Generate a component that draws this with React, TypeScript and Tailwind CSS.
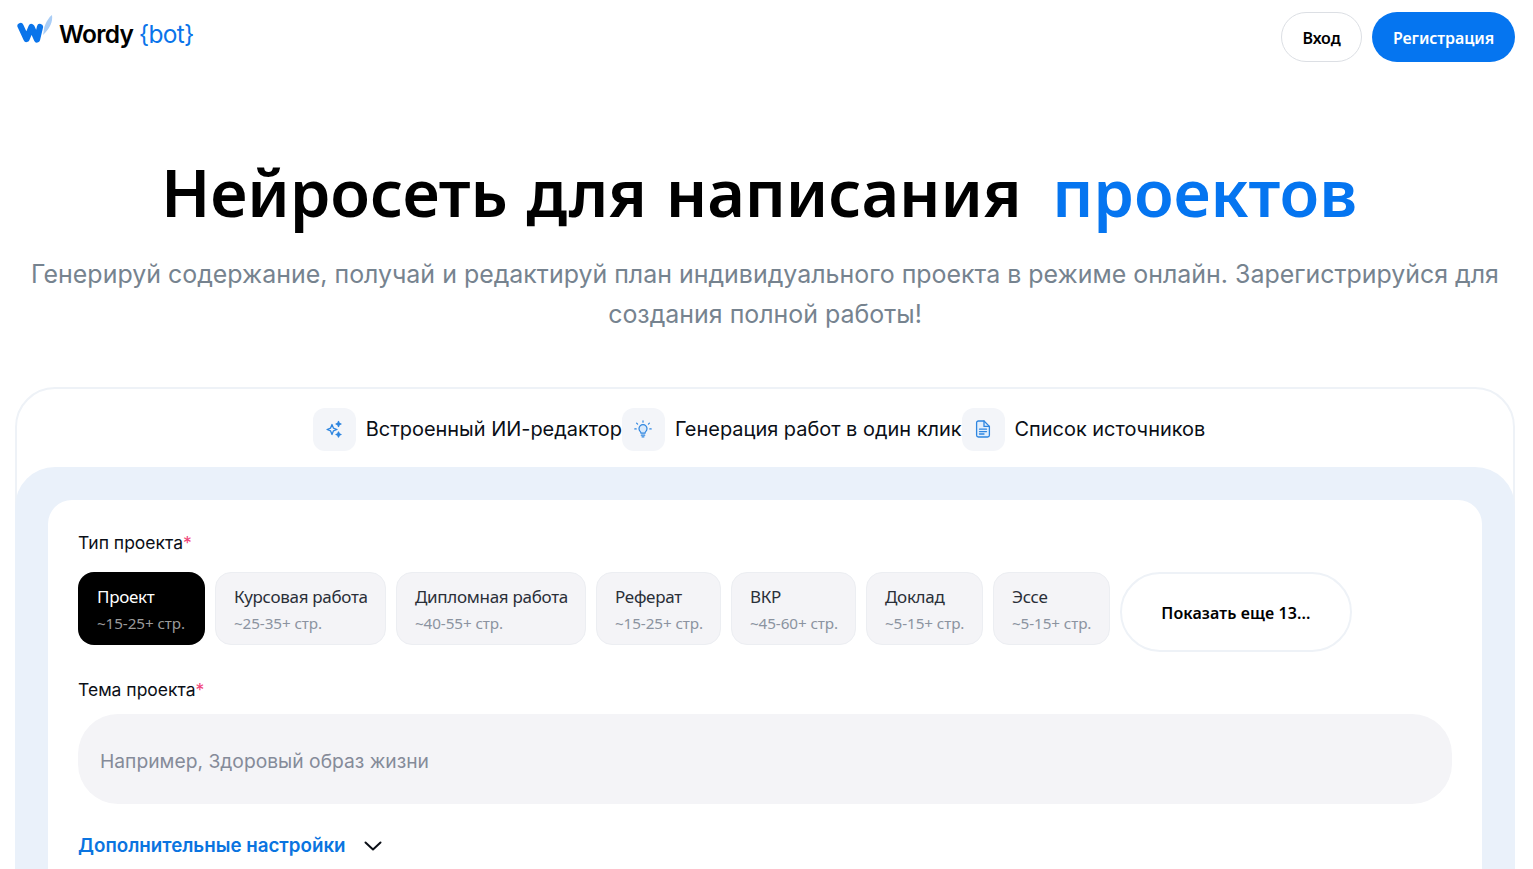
import React from "react";

const types = [
  { t: "Проект", s: "~15-25+ стр.", active: true, w: "w-[127px]" },
  { t: "Курсовая работа", s: "~25-35+ стр.", w: "w-[171px]" },
  { t: "Дипломная работа", s: "~40-55+ стр.", w: "w-[190px]" },
  { t: "Реферат", s: "~15-25+ стр.", w: "w-[125px]" },
  { t: "ВКР", s: "~45-60+ стр.", w: "w-[125px]" },
  { t: "Доклад", s: "~5-15+ стр.", w: "w-[117px]" },
  { t: "Эссе", s: "~5-15+ стр.", w: "w-[117px]" },
];

function Sparkle() {
  return (
    <svg width="18" height="18" viewBox="0 0 18 18" fill="none" stroke="#2f86e0" strokeWidth="1.3" strokeLinejoin="round">
      <path d="M7 4.500 8.400 8.100 12 9.500 8.400 10.900 7 14.500 5.600 10.900 2 9.500 5.600 8.100Z" />
      <path d="M13.500 1.500 14.200 3.300 16 4 14.200 4.700 13.500 6.500 12.800 4.700 11 4 12.800 3.300Z" fill="#2f86e0" />
      <path d="M13.500 12 14.200 13.800 16 14.500 14.200 15.200 13.500 17 12.800 15.200 11 14.500 12.800 13.800Z" fill="#2f86e0" />
    </svg>
  );
}

function Bulb() {
  return (
    <svg width="18" height="18" viewBox="0 0 18 18" fill="none" stroke="#2f86e0" strokeWidth="1.2" strokeLinecap="round">
      <path d="M6.300 11.600a4 4 0 1 1 5.400 0c-.5.5-.7 1-.7 1.600H7c0-.6-.2-1.100-.7-1.600Z" fill="#d8e9fb" />
      <path d="M7.300 15.200h3.400M8 16.800h2" />
      <path d="M9 .8v1.400M2.600 3.200l1 1M15.400 3.200l-1 1M.8 8.900h1.400M15.800 8.900h1.400" />
    </svg>
  );
}

function Doc() {
  return (
    <svg width="18" height="18" viewBox="0 0 18 18" fill="none" stroke="#2f86e0" strokeWidth="1.3" strokeLinecap="round" strokeLinejoin="round">
      <path d="M2.600 2.800A1.800 1.800 0 0 1 4.400 1h5.600l5.400 5.400v8.800a1.800 1.800 0 0 1-1.800 1.800H4.400a1.800 1.800 0 0 1-1.800-1.800Z" fill="#e3effc" />
      <path d="M10 1v5.400h5.400M5.500 9.200h7M5.500 11.600h7M5.500 14h4.500" />
    </svg>
  );
}

function Logo() {
  return (
    <svg width="38" height="40" viewBox="0 0 38 40" fill="none">
      <path d="M3.500 12 9.500 25 14.500 13 20 25.500 23 13" stroke="#0a74ea" strokeWidth="6.200" strokeLinecap="round" strokeLinejoin="round" />
      <path d="M35 1C36 8 33 14 26 21 27 17 26.500 14 28.500 10 30 7 32 3 35 1Z" fill="#a9cdf6" />
    </svg>
  );
}

function Feature({ icon, label }: { icon: React.ReactNode; label: string }) {
  return (
    <div className="flex items-center gap-[10px]">
      <div className="flex h-[43px] w-[43px] items-center justify-center rounded-[12px] bg-[#f3f5f9]">{icon}</div>
      <span className="text-[19.950px] leading-[30px] text-[#0b0f17]">{label}</span>
    </div>
  );
}

export default function App() {
  return (
    <div className="h-[869px] overflow-hidden bg-white font-['Inter','Liberation_Sans',sans-serif]">
      <header className="flex items-start justify-between pl-[17px] pr-[18px] pt-[12px]">
        <div className="flex items-center gap-[4px] pt-[2px]">
          <Logo />
          <span className="font-['Inter',sans-serif] text-[24.500px] font-semibold leading-[40px] tracking-[-0.7px] text-black">
            Wordy <span className="font-normal text-[#0a74ea]">{"{bot}"}</span>
          </span>
        </div>
        <div className="flex gap-[10px] font-['Noto_Sans',sans-serif] text-[16px] font-semibold">
          <button className="h-[50px] w-[81px] rounded-full border border-[#dcdfe4] bg-white pt-[2px] tracking-[-0.1px] text-black">Вход</button>
          <button className="h-[50px] w-[143px] rounded-full bg-[#0575f0] pt-[2px] tracking-[-0.1px] text-white">Регистрация</button>
        </div>
      </header>

      <section className="pl-[15px] pr-[18px] pt-[90px] text-center">
        <h1 className="pr-[12px] font-['Noto_Sans',sans-serif] text-[65px] font-semibold leading-[80px] tracking-[-0.1px] [word-spacing:2px] text-black">
          Нейросеть для написания <span className="ml-[12px] text-[#0575f0]">проектов</span>
        </h1>
        <p className="mt-[22px] text-[24.950px] leading-[40px] text-[#76838f]">
          Генерируй содержание, получай и редактируй план индивидуального проекта в режиме онлайн. Зарегистрируйся для создания полной работы!
        </p>
      </section>

      <div className="ml-[15px] mr-[18px] mt-[53px] rounded-[40px] border-2 border-[#eef2f7]">
        <div className="flex h-[78px] items-center justify-center pr-[12px] pt-[2px]">
          <Feature icon={<Sparkle />} label="Встроенный ИИ-редактор" />
          <Feature icon={<Bulb />} label="Генерация работ в один клик" />
          <Feature icon={<Doc />} label="Список источников" />
        </div>
        <div className="-mx-[2px] rounded-[40px] bg-[#eaf1fa] px-[33px] pt-[33px]">
          <div className="h-[500px] rounded-[24px] bg-white px-[30px] pt-[30px]">
            <div className="text-[17.500px] leading-[26px] text-[#0b0f17]">
              Тип проекта<span className="text-[#f0457a]">*</span>
            </div>
            <div className="mt-[16px] flex items-start gap-[10px]">
              {types.map((c) => (
                <div
                  key={c.t}
                  className={`flex h-[73px] flex-col justify-center rounded-[16px] pt-[2px] ${c.w} ${
                    c.active ? "bg-black pl-[19px] text-white" : "border border-[#eceef2] bg-[#f4f4f7] pl-[18px] text-[#2a2f38]"
                  }`}
                >
                  <span className="font-['Noto_Sans',sans-serif] text-[17px] leading-[26px] tracking-[-0.3px]">{c.t}</span>
                  <span className={`font-['Noto_Sans',sans-serif] text-[15.250px] leading-[26px] tracking-[-0.1px] ${c.active ? "text-[#9a9a9a]" : "text-[#8b93a0]"}`}>{c.s}</span>
                </div>
              ))}
              <button className="h-[80px] w-[232px] rounded-full border-2 border-[#eef2f7] bg-white pt-[2px] font-['Noto_Sans',sans-serif] text-[16px] font-semibold tracking-[0.1px] text-black">
                Показать еще 13...
              </button>
            </div>
            <div className="mt-[25px] text-[17.500px] leading-[26px] text-[#0b0f17]">
              Тема проекта<span className="text-[#f0457a]">*</span>
            </div>
            <div className="mt-[11px] flex h-[90px] items-center rounded-[40px] bg-[#f4f4f7] pl-[22px] pt-[4px] text-[19.250px] text-[#858b99]">
              Например, Здоровый образ жизни
            </div>
            <div className="mt-[28px] flex items-center gap-[17px]">
              <span className="text-[18.750px] font-semibold leading-[28px] text-[#0a74e0]">Дополнительные настройки</span>
              <svg width="20" height="20" viewBox="0 0 20 20" fill="none" stroke="#0b0f17" strokeWidth="2" strokeLinecap="round" strokeLinejoin="round">
                <path d="M2.500 6.500 10 13.500 17.500 6.500" />
              </svg>
            </div>
          </div>
        </div>
      </div>
    </div>
  );
}
